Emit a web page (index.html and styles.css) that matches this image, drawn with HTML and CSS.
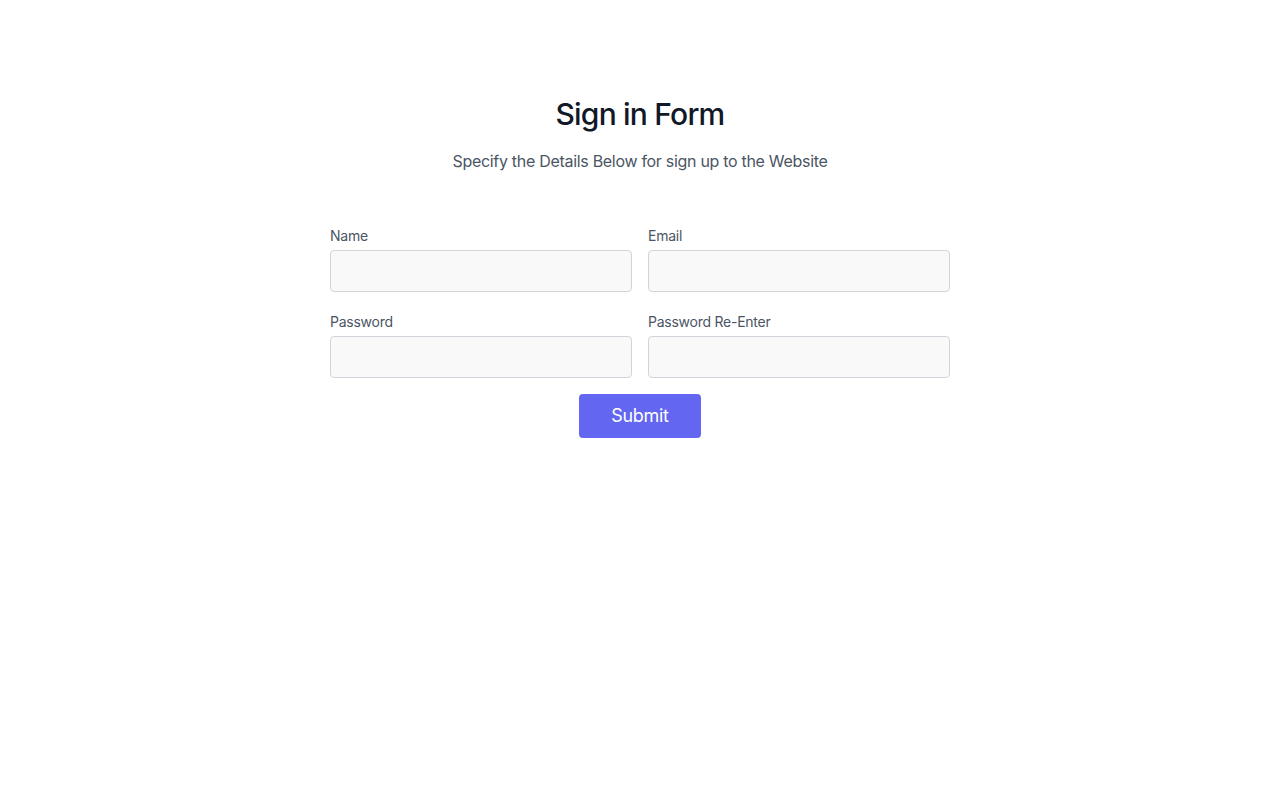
FILE: index.html
```html
<!DOCTYPE html>
<html lang="en">
<head>
<meta charset="utf-8">
<title>Sign in Form</title>
<link rel="stylesheet" href="styles.css">
</head>
<body>
<section class="section">
  <div class="container">
    <div class="header">
      <h1 class="title">Sign in Form</h1>
      <p class="subtitle">Specify the Details Below for sign up to the Website</p>
    </div>
    <div class="form-wrap">
      <div class="grid">
        <div class="cell half">
          <label class="label" for="name">Name</label>
          <input class="input" type="text" id="name" name="name">
        </div>
        <div class="cell half">
          <label class="label" for="email">Email</label>
          <input class="input" type="email" id="email" name="email">
        </div>
        <div class="cell half">
          <label class="label" for="password">Password</label>
          <input class="input" type="password" id="password" name="password">
        </div>
        <div class="cell half">
          <label class="label" for="password2">Password Re-Enter</label>
          <input class="input" type="password" id="password2" name="password2">
        </div>
        <div class="cell full">
          <button class="button" type="button">Submit</button>
        </div>
      </div>
    </div>
  </div>
</section>
</body>
</html>
```

FILE: styles.css
```css
*, *::before, *::after { box-sizing: border-box; }
html, body { margin: 0; padding: 0; background: #ffffff; }
body {
  font-family: Inter, "Noto Sans", "Liberation Sans", sans-serif;
  color: #4b5563;
}
.section { position: relative; }
.container {
  max-width: 1280px;
  margin: 0 auto;
  padding: 96px 20px;
}
.header {
  display: flex;
  flex-direction: column;
  text-align: center;
  width: 100%;
  margin-bottom: 48px;
}
.title {
  margin: 0 0 16px;
  font-size: 30px;
  line-height: 36px;
  font-weight: 500;
  letter-spacing: -0.8px;
  color: #111827;
}
.subtitle {
  margin: 0 auto;
  width: 66.666667%;
  font-size: 16px;
  line-height: 26px;
  letter-spacing: -0.3px;
  color: #4b5563;
}
.form-wrap {
  width: 50%;
  margin: 0 auto;
}
.grid {
  display: flex;
  flex-wrap: wrap;
  margin: -8px;
}
.cell { padding: 8px; }
.half { width: 50%; }
.full { width: 100%; display: flex; justify-content: center; }
.label {
  display: block;
  font-size: 14px;
  line-height: 28px;
  letter-spacing: -0.25px;
  color: #4b5563;
}
.input {
  display: block;
  width: 100%;
  margin: 0;
  background: #f9f9fa;
  border: 1px solid #d1d5db;
  border-radius: 4px;
  font-family: inherit;
  font-size: 16px;
  line-height: 32px;
  padding: 4px 12px;
  color: #374151;
  outline: none;
}
.button {
  display: flex;
  margin: 0 auto;
  border: 0;
  border-radius: 4px;
  background: #6366f1;
  color: #ffffff;
  font-family: inherit;
  font-size: 18px;
  line-height: 28px;
  letter-spacing: -0.3px;
  padding: 8px 32px;
  cursor: pointer;
}
```
